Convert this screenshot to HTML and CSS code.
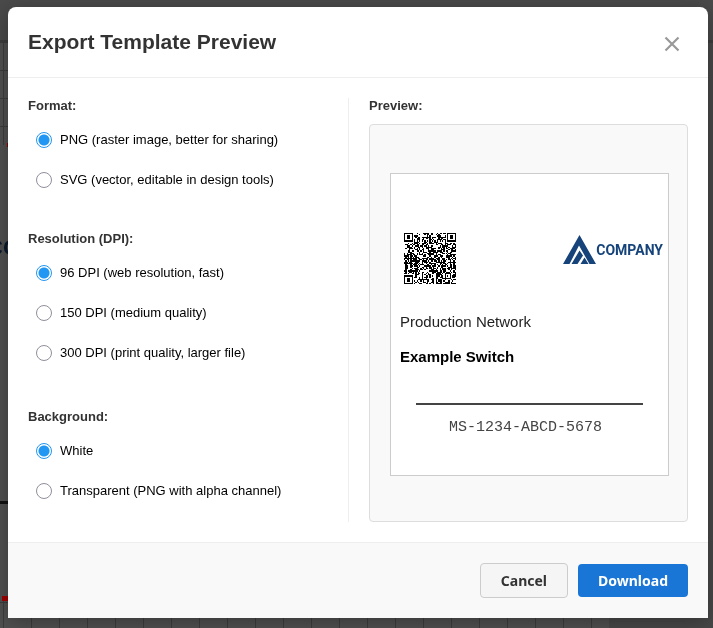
FILE: index.html
```html
<!DOCTYPE html>
<html lang="en">
<head>
<meta charset="utf-8">
<title>Export Template Preview</title>
<link rel="stylesheet" href="styles.css">
</head>
<body>
<div class="canvas" aria-hidden="true">
  <div class="ruler"></div>
  <div class="grid"></div>
  <span class="canvas-page"></span>
  <span class="canvas-logo">CO</span>
  <span class="canvas-rule"></span>
  <span class="canvas-pin"></span>
  <span class="canvas-mark"></span>
</div>
<main class="modal" role="dialog" aria-labelledby="title">
  <header class="modal-header">
    <h1 id="title">Export Template Preview</h1>
    <button class="close" type="button" aria-label="Close">
      <svg viewBox="0 0 16 16" width="16" height="16"><path d="M1.500 1.500 14.500 14.500M14.500 1.500 1.500 14.500" fill="none" stroke="#999" stroke-width="2.200"/></svg>
    </button>
  </header>
  <div class="modal-body">
    <form class="options">
      <fieldset>
        <legend>Format:</legend>
        <label><input type="radio" name="format" checked>PNG (raster image, better for sharing)</label>
        <label><input type="radio" name="format">SVG (vector, editable in design tools)</label>
      </fieldset>
      <fieldset class="resolution">
        <legend>Resolution (DPI):</legend>
        <label><input type="radio" name="dpi" checked>96 DPI (web resolution, fast)</label>
        <label><input type="radio" name="dpi">150 DPI (medium quality)</label>
        <label><input type="radio" name="dpi">300 DPI (print quality, larger file)</label>
      </fieldset>
      <fieldset>
        <legend>Background:</legend>
        <label><input type="radio" name="background" checked>White</label>
        <label><input type="radio" name="background">Transparent (PNG with alpha channel)</label>
      </fieldset>
    </form>
    <section class="preview">
      <h2>Preview:</h2>
      <div class="preview-frame">
        <article class="ticket">
          <div class="ticket-top">
            <svg class="qr" viewBox="0 0 41 41" preserveAspectRatio="none" shape-rendering="crispEdges"><path id="qr"/></svg>
            <div class="brand">
              <svg viewBox="0 0 33 29" width="33" height="29"><g fill="#15437a"><path d="M16.500 0 33 29H26.500L16 10.500 6.500 29H0Z"/><path d="M16.500 15.500 20 20.500 14.500 29H8.500Z"/><path d="M21.500 22.500 25.500 29H17.500Z"/></g></svg>
              <span>COMPANY</span>
            </div>
          </div>
          <p class="network">Production Network</p>
          <p class="device">Example Switch</p>
          <hr>
          <p class="serial">MS-1234-ABCD-5678</p>
        </article>
      </div>
    </section>
  </div>
  <footer class="modal-footer">
    <button class="btn cancel" type="button">Cancel</button>
    <button class="btn download" type="button">Download</button>
  </footer>
</main>
<script src="qr.js"></script>
</body>
</html>
```
FILE: styles.css
```css
* { box-sizing: border-box; }
body {
  margin: 0;
  min-height: 100vh;
  padding: 7px 5px 10px 8px;
  background: #484848;
  color: #000;
  font-family: "Liberation Sans", Arial, sans-serif;
  font-size: 13px;
  line-height: 15px;
}
h1, h2, p { margin: 0; }
.canvas { position: fixed; inset: 0; overflow: hidden; z-index: -1; }
.ruler { height: 43px; background: #4a4a4a; border-bottom: 3px solid #3d3d3d; }
.grid {
  height: 100%;
  margin-right: 104px;
  background:
    repeating-linear-gradient(90deg, transparent 0 3px, #3c3c3c 3px 4px, transparent 4px 28px),
    repeating-linear-gradient(transparent 0 27px, #3c3c3c 27px 28px),
    #505050;
}
.canvas-page { position: absolute; left: 0; top: 145px; width: 40px; height: 455px; background: #505050; }
.canvas-logo { position: absolute; left: -13px; top: 237px; font: bold 22px/22px "Liberation Sans", sans-serif; color: #0b1a2c; }
.canvas-rule { position: absolute; left: 0; top: 501px; width: 20px; height: 3px; background: #111; }
.canvas-pin { position: absolute; left: 7px; top: 143px; width: 5px; height: 4px; background: #800; }
.canvas-mark { position: absolute; left: 2px; top: 596px; width: 20px; height: 5px; background: #a00000; }
.modal {
  max-width: 700px;
  background: #fff;
  border-radius: 8px 8px 0 0;
  box-shadow: 0 4px 20px rgba(0, 0, 0, .3);
}
.modal-header {
  display: flex;
  align-items: center;
  justify-content: space-between;
  padding: 20px;
  height: 71px;
  border-bottom: 1px solid #eee;
}
h1 { font-size: 21px; line-height: 24px; color: #333; }
.close { display: flex; padding: 12px 8px 8px; border: 0; background: none; }
.modal-body { display: grid; grid-template-columns: 321px 1fr; column-gap: 20px; padding: 20px; }
.options { border-right: 1px solid #eee; padding-bottom: 11px; }
fieldset { margin: 0 0 31px; padding: 0; border: 0; }
fieldset:last-child { margin: 0; }
.resolution { margin-bottom: 36px; }
legend, h2 { padding: 0; margin-bottom: 7px; font-size: 13px; font-weight: bold; color: #333; line-height: 15px; }
.options label { display: flex; align-items: center; gap: 8px; height: 40px; padding-left: 8px; line-height: 18px; padding-bottom: 1px; }
input[type="radio"] {
  appearance: none;
  width: 16px;
  height: 16px;
  margin: 0;
  border: 1px solid #8f8f9d;
  border-radius: 50%;
  background: #fff;
}
input[type="radio"]:checked { border-color: #2196f3; background: radial-gradient(circle, #2196f3 5px, #fff 6px); }
.preview { display: flex; flex-direction: column; }
.preview h2 { margin-bottom: 11px; }
.preview-frame {
  flex: 1;
  display: grid;
  align-items: center;
  padding: 22px 18px 20px 20px;
  background: #f9f9f9;
  border: 1px solid #ddd;
  border-radius: 4px;
}
.ticket { padding: 59px 5px 39px 9px; background: #fff; border: 1px solid #ccc; }
.ticket-top { display: flex; justify-content: space-between; padding-left: 4px; }
.qr { width: 52px; height: 51px; }
.brand { display: flex; align-items: center; height: 34px; color: #15437a; font: bold 14px/16px Roboto, sans-serif; }
.network { margin-top: 29px; font-size: 15px; line-height: 18px; color: #222; }
.device { margin-top: 17px; font-size: 15px; line-height: 18px; font-weight: bold; }
hr { height: 2px; margin: 37px 20px 15px 16px; border: 0; background: #444; }
.serial { padding-right: 12px; font: 15px/16px "Liberation Mono", monospace; color: #444; text-align: center; }
.modal-footer {
  display: flex;
  align-items: center;
  justify-content: flex-end;
  gap: 10px;
  padding: 20px;
  background: #f9f9f9;
  border-top: 1px solid #eee;
}
.btn { padding: 7px 20px; border: 0; border-radius: 4px; font: bold 14px/19px "Noto Sans", sans-serif; }
.cancel { background: #f5f5f5; border: 1px solid #ccc; color: #333; }
.download { background: #1976d6; color: #fff; }
```
FILE: qr.js
```js
// Draws the 41-module code: three finder squares, timing rows and data modules.
(function () {
  var size = 41, seed = 5678, d = "";
  function finder(x, y) {
    if (x > 7 && x < size - 8 || y > 7 && (y < size - 8 || x > 7)) return null;
    var cx = x < 8 ? 3 : size - 4, cy = y < 8 ? 3 : size - 4;
    var r = Math.max(Math.abs(x - cx), Math.abs(y - cy));
    return r !== 2 && r < 4;
  }
  function align(x, y) {
    var r = Math.max(Math.abs(x - 34), Math.abs(y - 34));
    return r > 2 ? null : r !== 1;
  }
  for (var y = 0; y < size; y++) {
    for (var x = 0; x < size; x++) {
      seed = (seed * 48271) % 2147483647;
      var on = finder(x, y);
      if (on === null) on = align(x, y);
      if (on === null && (x === 6 || y === 6)) on = (x + y) % 2 === 0;
      if (on === null) on = seed / 2147483647 < 0.56;
      if (on) d += "M" + x + " " + y + "h1v1h-1z";
    }
  }
  document.getElementById("qr").setAttribute("d", d);
})();
```
